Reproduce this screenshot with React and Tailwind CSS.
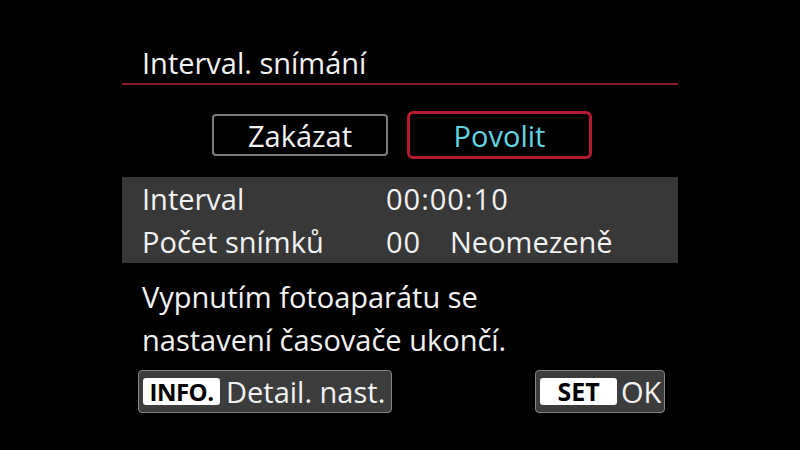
export default function App() {
  return (
    <div
      className="w-[800px] h-[450px] bg-black text-[#f2f2f2] overflow-hidden"
      style={{ fontFamily: '"Open Sans", "Noto Sans", sans-serif' }}
    >
      <div className="ml-[122px] w-[556px] pt-[44px]">
        {/* Title */}
        <div className="h-[41px] border-b-2 border-[#8a1a2b] pl-[20px] text-[29px] leading-[37px]">
          Interval. snímání
        </div>

        {/* Disable / enable */}
        <div className="mt-[26px] h-[48px] flex items-center pl-[90px] gap-[19px]">
          <div className="w-[176px] h-[42px] border-2 border-[#7c7c7c] rounded-[4px] flex items-center justify-center text-[29px] leading-none">
            Zakázat
          </div>
          <div className="w-[185px] h-[48px] border-[3px] border-[#b51a30] rounded-[6px] flex items-center justify-center text-[29px] leading-none text-[#63d3e0]">
            Povolit
          </div>
        </div>

        {/* Settings panel */}
        <div className="mt-[18px] bg-[#383838] h-[86px] text-[29px] leading-[43px]">
          <div className="flex pl-[20px]">
            <span className="w-[244px]">Interval</span>
            <span className="tracking-[1px]">00:00:10</span>
          </div>
          <div className="flex pl-[20px]">
            <span className="w-[244px]">Počet snímků</span>
            <span className="w-[64px] tracking-[1px]">00</span>
            <span>Neomezeně</span>
          </div>
        </div>

        {/* Note */}
        <div className="mt-[12px] pl-[20px] text-[29px] leading-[43px]">
          <p>Vypnutím fotoaparátu se</p>
          <p>nastavení časovače ukončí.</p>
        </div>

        {/* Bottom buttons */}
        <div className="mt-[9px] flex justify-between pl-[16px] pr-[13px]">
          <div className="h-[43px] w-[254px] bg-[#3c3c3c] border border-[#858585] rounded-[4px] flex items-center pl-[4px] gap-[6px]">
            <span className="w-[77px] h-[27px] bg-white rounded-[3px] text-black font-bold text-[24px] leading-[27px] text-center tracking-[-0.5px]">
              INFO.
            </span>
            <span className="text-[29px] leading-none">Detail. nast.</span>
          </div>
          <div className="h-[43px] w-[130px] bg-[#3c3c3c] border border-[#858585] rounded-[4px] flex items-center pl-[4px] gap-[4px]">
            <span className="w-[77px] h-[27px] bg-white rounded-[3px] text-black font-bold text-[25px] leading-[27px] text-center">
              SET
            </span>
            <span className="text-[29px] leading-none">OK</span>
          </div>
        </div>
      </div>
    </div>
  )
}
